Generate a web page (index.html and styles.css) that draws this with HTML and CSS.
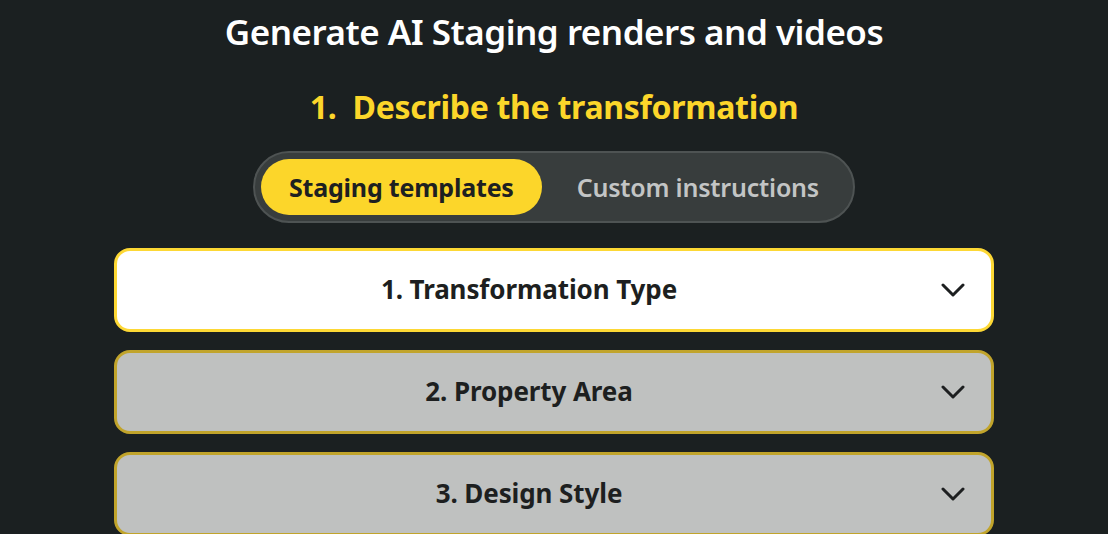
FILE: index.html
```html
<!DOCTYPE html>
<html lang="en">
<head>
<meta charset="utf-8">
<title>Generate AI Staging</title>
<link rel="stylesheet" href="styles.css">
</head>
<body>
<main class="page">
  <h1 class="title">Generate AI Staging renders and videos</h1>
  <h2 class="step">1.&nbsp; Describe the transformation</h2>
  <div class="toggle">
    <button class="toggle-btn active">Staging templates</button>
    <button class="toggle-btn">Custom instructions</button>
  </div>
  <div class="cards">
    <div class="card open">
      <span class="card-label">1. Transformation Type</span>
      <svg class="chev" viewBox="0 0 24 14" width="24" height="14"><path d="M2 2 L12 12 L22 2" fill="none" stroke="#1d1f20" stroke-width="3" stroke-linecap="round" stroke-linejoin="round"/></svg>
    </div>
    <div class="card">
      <span class="card-label">2. Property Area</span>
      <svg class="chev" viewBox="0 0 24 14" width="24" height="14"><path d="M2 2 L12 12 L22 2" fill="none" stroke="#1d1f20" stroke-width="3" stroke-linecap="round" stroke-linejoin="round"/></svg>
    </div>
    <div class="card">
      <span class="card-label">3. Design Style</span>
      <svg class="chev" viewBox="0 0 24 14" width="24" height="14"><path d="M2 2 L12 12 L22 2" fill="none" stroke="#1d1f20" stroke-width="3" stroke-linecap="round" stroke-linejoin="round"/></svg>
    </div>
  </div>
</main>
</body>
</html>
```

FILE: styles.css
```css
html, body {
  margin: 0;
  padding: 0;
  background: #1b2021;
  font-family: "Noto Sans", "Open Sans", sans-serif;
}
.page {
  display: flex;
  flex-direction: column;
  align-items: center;
  padding-top: 10px;
}
.title {
  margin: 0;
  color: #ffffff;
  font-size: 35px;
  font-weight: 600;
  line-height: 44px;
  letter-spacing: -0.5px;
}
.step {
  margin: 33px 0 0;
  color: #fcd62a;
  font-size: 32px;
  font-weight: 700;
  line-height: 40px;
  letter-spacing: -0.3px;
}
.toggle {
  margin-top: 24px;
  display: flex;
  align-items: center;
  gap: 7px;
  padding: 6px;
  background: #383d3d;
  border: 2px solid #4e5353;
  border-radius: 36px;
}
.toggle-btn {
  border: none;
  background: transparent;
  font-family: inherit;
  font-size: 25px;
  font-weight: 600;
  color: #c3c5c5;
  height: 56px;
  padding: 0 28px;
  border-radius: 28px;
  letter-spacing: -0.2px;
}
.toggle-btn.active {
  background: #fcd62a;
  color: #1d2021;
  font-weight: 700;
}
.cards {
  margin-top: 25px;
  width: 880px;
  display: flex;
  flex-direction: column;
  gap: 18px;
}
.card {
  box-sizing: border-box;
  height: 84px;
  border: 3px solid #c1a42b;
  border-radius: 16px;
  background: #bfc1c0;
  display: flex;
  align-items: center;
  padding: 0 50px 3px 0;
  position: relative;
}
.card.open {
  background: #ffffff;
  border-color: #fdd835;
}
.card-label {
  flex: 1;
  text-align: center;
  font-size: 26px;
  font-weight: 700;
  color: #1d1f20;
  letter-spacing: -0.1px;
}
.chev {
  position: absolute;
  right: 26px;
  top: 50%;
  margin-top: -7px;
}
```
